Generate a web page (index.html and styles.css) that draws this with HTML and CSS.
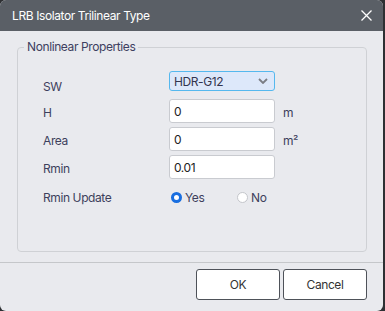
FILE: index.html
```html
<!DOCTYPE html>
<html>
<head>
    <title>LRB Isolator Trilinear Type</title>
    <link rel="stylesheet" href="styles.css">
</head>
<body>
    <div class="dialog">
        <div class="titlebar">
            <span class="title">LRB Isolator Trilinear Type</span>
            <svg class="close" width="11" height="11" viewBox="0 0 11 11">
                <path d="M0.5 0.5 L10.5 10.5 M10.5 0.5 L0.5 10.5" stroke="#fff" stroke-width="1.3" fill="none"/>
            </svg>
        </div>

        <div class="content">
            <fieldset class="group">
                <legend>Nonlinear Properties</legend>
                <div class="form">
                    <div class="row row-first">
                        <span class="label">SW</span>
                        <div class="select">
                            <span>HDR-G12</span>
                            <svg width="10" height="6" viewBox="0 0 10 6">
                                <path d="M1 1 L5 5 L9 1" stroke="#7a7d84" stroke-width="1.8" fill="none"/>
                            </svg>
                        </div>
                    </div>
                    <div class="row">
                        <span class="label">H</span>
                        <div class="input">0</div>
                        <span class="unit">m</span>
                    </div>
                    <div class="row">
                        <span class="label">Area</span>
                        <div class="input">0</div>
                        <span class="unit">m²</span>
                    </div>
                    <div class="row">
                        <span class="label">Rmin</span>
                        <div class="input">0.01</div>
                    </div>
                    <div class="row row-radio">
                        <span class="label">Rmin Update</span>
                        <div class="radios">
                            <span class="option option-yes"><span class="radio on"></span>Yes</span>
                            <span class="option"><span class="radio"></span>No</span>
                        </div>
                    </div>
                </div>
            </fieldset>
        </div>

        <div class="footer">
            <button class="btn">OK</button>
            <button class="btn">Cancel</button>
        </div>
    </div>
</body>
</html>
```

FILE: styles.css
```css
body {
    margin: 0;
    background-color: #2e3033;
    font-family: 'Inter', 'Noto Sans', sans-serif;
    font-size: 12px;
    letter-spacing: -0.4px;
}
.dialog {
    width: 383px;
    height: 311px;
    background: #e9eaee;
    border-radius: 6px;
    overflow: hidden;
}
.titlebar {
    height: 31px;
    background: #5a5f66;
    color: #fff;
    display: flex;
    align-items: center;
    justify-content: space-between;
    padding: 0 11px 0 12px;
}
.title {
    font-size: 12px;
}
.close {
    display: block;
    margin-top: -1px;
}
.content {
    padding: 8px 16px 0 17px;
}
.group {
    margin: 0;
    padding: 16px 0 44px 0;
    border: 1px solid #cfd1d5;
    border-radius: 4px;
}
.group legend {
    margin-left: 6px;
    padding: 0 3px;
    font-size: 12px;
    line-height: 16px;
    color: #3d4060;
}
.form {
    padding-left: 25px;
}
.row {
    display: grid;
    grid-template-columns: 126px 106px auto;
    align-items: center;
    margin-top: 4px;
}
.row-first {
    margin-top: 0;
    grid-template-rows: 20px;
}
.row-radio {
    margin-top: 8px;
    height: 20px;
}
.label {
    color: #3d3f5c;
    line-height: 15px;
    padding-top: 3px;
}
.row-first .label {
    padding-top: 0;
    align-self: end;
    margin-bottom: -3px;
}
.row-radio .label {
    padding-top: 0;
}
.select {
    height: 20px;
    box-sizing: border-box;
    border: 1px solid #55b8ee;
    border-radius: 3px;
    background: #dde8fa;
    display: flex;
    align-items: center;
    justify-content: space-between;
    padding: 0 6px 0 4px;
    color: #33354f;
}
.select svg {
    display: block;
}
.row-first + .row {
    margin-top: 8px;
}
.input {
    height: 24px;
    box-sizing: border-box;
    border: 1px solid #c9cbd0;
    border-radius: 3px;
    background: #fff;
    padding: 0 4px;
    display: flex;
    align-items: center;
    color: #222;
}
.unit {
    color: #3d3f5c;
    padding: 2px 0 0 8px;
}
.radios {
    display: flex;
    align-items: center;
    grid-column: 2 / 4;
    margin-left: 2px;
}
.option {
    display: flex;
    align-items: center;
    gap: 3px;
    color: #3d3f5c;
}
.option-yes {
    width: 66px;
}
.radio {
    width: 11px;
    height: 11px;
    box-sizing: border-box;
    border-radius: 50%;
    border: 1px solid #c4c6cb;
    background: #fff;
}
.radio.on {
    border: 3.5px solid #1a6fe0;
}
.footer {
    margin-top: 10px;
    border-top: 1px solid #c5c7ca;
    display: flex;
    justify-content: flex-end;
    gap: 3px;
    padding: 6px 16px 0 0;
}
.btn {
    width: 84px;
    height: 31px;
    background: #fff;
    border: 1px solid #4e5259;
    border-radius: 3px;
    font-family: inherit;
    font-size: 12px;
    letter-spacing: inherit;
    color: #333;
}
```
